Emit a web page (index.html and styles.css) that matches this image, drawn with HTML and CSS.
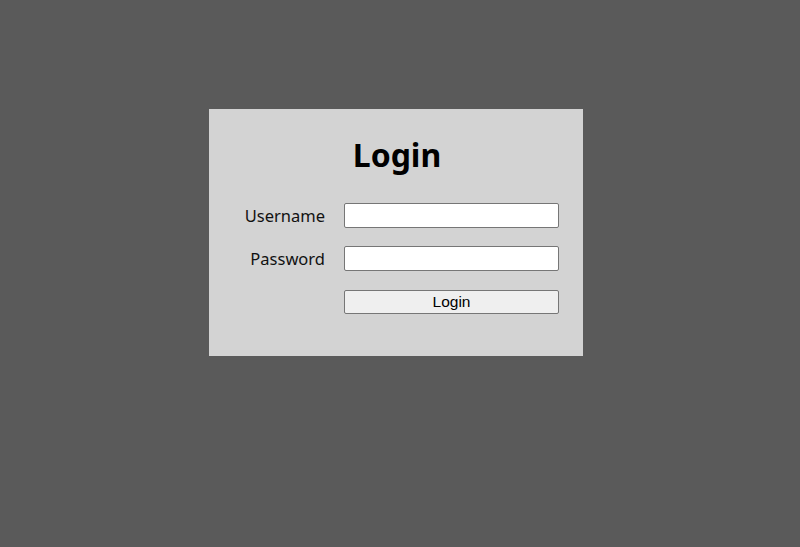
FILE: index.html
```html
<!DOCTYPE html>
<html lang="en">
<head>
<meta charset="utf-8">
<title>Login</title>
<link rel="stylesheet" href="styles.css">
</head>
<body>
  <main class="card">
    <h1 class="title">Login</h1>
    <form class="form">
      <label class="label" for="username">Username</label>
      <input class="field" id="username" type="text">
      <label class="label" for="password">Password</label>
      <input class="field" id="password" type="password">
      <span class="spacer"></span>
      <button class="btn" type="button">Login</button>
    </form>
  </main>
</body>
</html>
```
FILE: styles.css
```css
html, body {
  margin: 0;
  padding: 0;
}
body {
  background: #5a5a5a;
  width: 800px;
  height: 547px;
  overflow: hidden;
  font-family: "Noto Sans", "Open Sans", sans-serif;
}
.card {
  box-sizing: border-box;
  width: 374px;
  height: 247px;
  margin: 109px 0 0 209px;
  background: #d3d3d3;
  padding-top: 24px;
}
.title {
  margin: 0 0 27px;
  text-align: center;
  font-size: 32px;
  line-height: 43px;
  font-weight: 700;
  color: #000;
  padding-left: 2px;
}
.form {
  display: grid;
  grid-template-columns: 116px 215px;
  grid-auto-rows: 25px;
  column-gap: 19px;
  row-gap: 18px;
  align-items: center;
}
.label {
  text-align: right;
  font-size: 16.5px;
  color: #111;
}
.field {
  box-sizing: border-box;
  width: 215px;
  height: 25px;
  margin: 0;
  border: 1px solid #767676;
  border-radius: 2px;
  background: #fff;
  padding: 1px 2px;
}
.btn {
  box-sizing: border-box;
  width: 215px;
  height: 24px;
  margin: 1px 0 0;
  border: 1px solid #767676;
  border-radius: 2px;
  background: #efefef;
  font-family: "Liberation Sans", Arial, sans-serif;
  font-size: 15.5px;
  color: #000;
  padding: 0;
}
```
